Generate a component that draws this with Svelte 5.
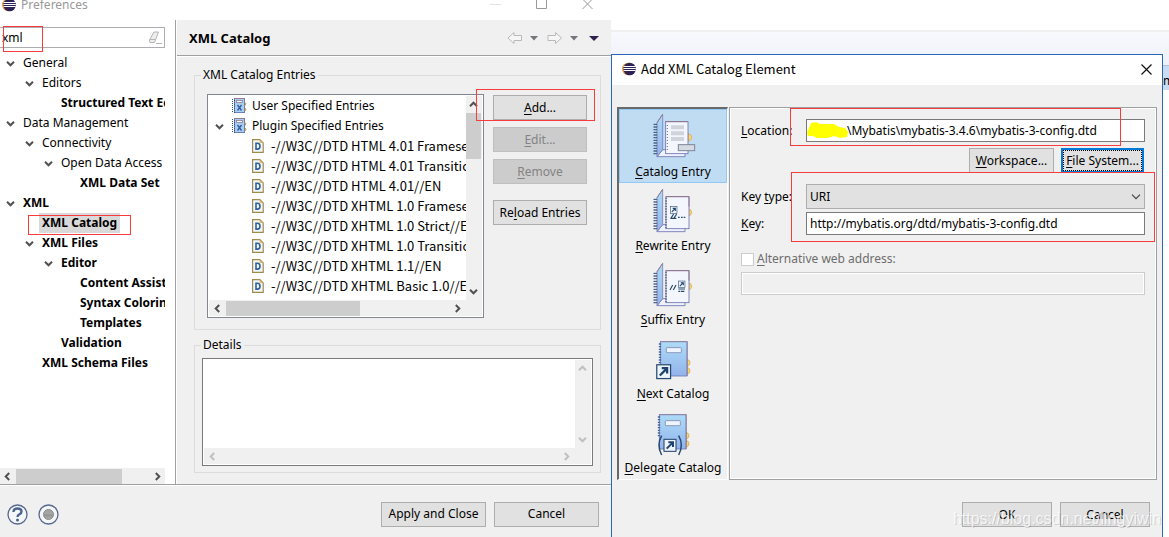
<script lang="ts">
  interface TreeItem {
    label: string;
    depth: number;
    open?: boolean;
    bold?: boolean;
    selected?: boolean;
  }

  const pages: TreeItem[] = [
    { label: 'General', depth: 0, open: true },
    { label: 'Editors', depth: 1, open: true },
    { label: 'Structured Text Editors', depth: 2, bold: true },
    { label: 'Data Management', depth: 0, open: true },
    { label: 'Connectivity', depth: 1, open: true },
    { label: 'Open Data Access', depth: 2, open: true },
    { label: 'XML Data Set', depth: 3, bold: true },
    { label: 'XML', depth: 0, open: true, bold: true },
    { label: 'XML Catalog', depth: 1, bold: true, selected: true },
    { label: 'XML Files', depth: 1, open: true, bold: true },
    { label: 'Editor', depth: 2, open: true, bold: true },
    { label: 'Content Assist', depth: 3, bold: true },
    { label: 'Syntax Coloring', depth: 3, bold: true },
    { label: 'Templates', depth: 3, bold: true },
    { label: 'Validation', depth: 2, bold: true },
    { label: 'XML Schema Files', depth: 1, bold: true },
  ];

  const entries = [
    '-//W3C//DTD HTML 4.01 Frameset//EN',
    '-//W3C//DTD HTML 4.01 Transitional//EN',
    '-//W3C//DTD HTML 4.01//EN',
    '-//W3C//DTD XHTML 1.0 Frameset//EN',
    '-//W3C//DTD XHTML 1.0 Strict//EN',
    '-//W3C//DTD XHTML 1.0 Transitional//EN',
    '-//W3C//DTD XHTML 1.1//EN',
    '-//W3C//DTD XHTML Basic 1.0//EN',
  ];

  const kinds = [
    { id: 'catalog', key: 'C', rest: 'atalog Entry' },
    { id: 'rewrite', key: 'R', rest: 'ewrite Entry' },
    { id: 'suffix', key: 'S', rest: 'uffix Entry' },
    { id: 'next', key: 'N', rest: 'ext Catalog' },
    { id: 'delegate', key: 'D', rest: 'elegate Catalog' },
  ];

  let filter = $state('xml');
  let kind = $state('catalog');
  let location = $state('\\Mybatis\\mybatis-3.4.6\\mybatis-3-config.dtd');
  let keyType = $state('URI');
  let key = $state('http://mybatis.org/dtd/mybatis-3-config.dtd');
</script>

{#snippet chevron(dir: string)}
  <svg class="chevron {dir}" width="9" height="9" viewBox="0 0 9 9">
    <path d="M1 2.8 4.5 6.3 8 2.8" fill="none" stroke="currentColor" stroke-width="2" />
  </svg>
{/snippet}

{#snippet eclipse()}
  <svg class="eclipse" width="14" height="14" viewBox="0 0 14 14">
    <circle cx="6.2" cy="7" r="6.2" fill="#f39a3c" />
    <circle cx="7.6" cy="7" r="6.3" fill="#2c2255" />
    <path d="M1.6 4.5H13.6M1.4 6.5H13.8M1.6 8.5H13.6" stroke="#fff" stroke-width="1" />
  </svg>
{/snippet}

{#snippet bookSmall()}
  <svg width="16" height="16" viewBox="0 0 16 16">
    <rect x="2.5" y=".5" width="10" height="14" fill="#a9cdf3" stroke="#6a7fb5" />
    <path d="M3 .5h9.5" stroke="#9a7a8c" />
    <path d="M.5 1v14M2.5 2v13" stroke="#35548c" stroke-dasharray="1 1" />
    <rect x="4.5" y="2.5" width="6" height="2" fill="#fff" stroke="#8a7f96" stroke-width=".8" />
    <path d="m5.5 7 4 5.5M9.5 7l-4 5.5" stroke="#2d5d9a" stroke-width="1.3" />
    <path d="M13 4.5q1.8 1 0 3M13 10q1.8 1.2 0 3" fill="#f3cf7a" stroke="#c09a45" />
  </svg>
{/snippet}

{#snippet dtdFile()}
  <svg width="12" height="14" viewBox="0 0 12 14">
    <path d="M.6.6h7.2l3.4 3.4v9.4H.6z" fill="#f3f8fd" stroke="#a08a4c" stroke-width="1.2" />
    <path d="M7.6.8V4h3.4z" fill="#e0b867" />
    <path d="M4 4.3h1.4q2.6 0 2.6 2.9t-2.6 2.9H4z" fill="none" stroke="#2f6199" stroke-width="1.6" />
  </svg>
{/snippet}

{#snippet arrowBox(x: number, y: number, s: number)}
  <g transform="translate({x} {y}) scale({s})">
    <rect x="1" y="1" width="18" height="18" fill="#eef4fb" stroke="#27486f" stroke-width="1.6" />
    <path d="M5 15 13 7M7.5 5.5h7v7" fill="none" stroke="#1f4370" stroke-width="3" />
  </g>
{/snippet}

{#snippet openBook(y: number)}
  <g transform="translate(0 {y})">
    <path d="M12 131 29 110H96V131Z" fill="#eef1fb" stroke="#6c70b0" stroke-width="2.5" />
    <path d="M12 29 29 4V110L12 131Z" fill="url(#cover)" stroke="#7d7fb2" stroke-width="2.5" />
    <path d="M12 29 29 4" stroke="#93707f" stroke-width="2.5" />
    <path d="M3 34h8M3 42h8M3 50h8M3 58h8M3 66h8M3 74h8M3 82h8M3 90h8M3 98h8M3 106h8M3 114h8M3 122h8" stroke="#4a5f86" stroke-width="4" stroke-linecap="round" stroke-dasharray="4 3" />
    <path d="M105 62q11 2 11 11t-11 12z" fill="#f9d679" stroke="#d2a23e" stroke-width="2" />
  </g>
{/snippet}

{#snippet closedBook(x: number, y: number)}
  <g transform="translate({x} {y})">
    <path d="M82 54q9 2 9 10t-9 11zM82 78q9 2 9 10t-9 11z" fill="#f9d679" stroke="#cd9f3d" stroke-width="2" />
    <rect x="2" y="1" width="80" height="103" fill="url(#cover)" stroke="#6c79b8" stroke-width="2.5" />
    <path d="M1 1h82v103" fill="none" stroke="#927f9b" stroke-width="2.5" />
    <rect x="20" y="19" width="45" height="15" rx="2" fill="#eef5fd" stroke="#8388ad" stroke-width="2.5" />
    <path d="M-1 8h7M-1 16h7M-1 24h7M-1 32h7M-1 40h7M-1 48h7M-1 56h7M-1 64h7" stroke="#46618e" stroke-width="4" stroke-linecap="round" stroke-dasharray="4 3" />
  </g>
{/snippet}

<div class="desktop">
  <section class="window prefs">
    <header class="caption">
      {@render eclipse()}
      <span>Preferences</span>
      <div class="caption-tools">
        <svg width="11" height="12" viewBox="0 0 11 12"><path d="M0 5.5h11" stroke="#e2e2e2" /></svg>
        <svg width="11" height="12" viewBox="0 0 11 12"><path d="M.5-.5h10v10H.5z" fill="none" stroke="#999" /></svg>
        <svg width="11" height="12" viewBox="0 0 11 12"><path d="m.5 0 10 10M10.5 0l-10 10" stroke="#999" /></svg>
      </div>
    </header>

    <div class="prefs-body">
      <nav class="side">
        <div class="filter">
          <input type="text" aria-label="Filter" bind:value={filter} />
          <svg width="14" height="14" viewBox="0 0 14 14">
            <path d="m6 1 4.5 0-4 10.5H2L1.500 9z" fill="#eee" stroke="#b5b5b5" />
            <path d="m2 8.5 5 0M8 12.5h6" stroke="#b5b5b5" />
          </svg>
          <i class="mark mark-filter"></i>
        </div>
        <ul class="tree">
          {#each pages as page}
            <li class:bold={page.bold} style="padding-left: {page.depth * 19}px">
              <span class="twisty">{#if page.open}{@render chevron('down')}{/if}</span>
              <span class="label" class:selected={page.selected}>{page.label}</span>
              {#if page.selected}<i class="mark mark-page"></i>{/if}
            </li>
          {/each}
        </ul>
        <div class="hbar">
          {@render chevron('left')}
          <span class="thumb wide"></span>
          {@render chevron('right')}
        </div>
      </nav>

      <main class="page">
        <div class="page-head">
          <h1>XML Catalog</h1>
          <svg width="94" height="14" viewBox="0 0 94 14">
            <path d="M1 7 7 1.5V4.5H14.5V9.5H7V12.5Z" fill="#f6f6f6" stroke="#b9b9b9" />
            <path d="M23 5h8l-4 4.5z" fill="#77757b" />
            <path d="M54.5 7 48.5 1.5V4.5H41V9.5H48.5V12.5Z" fill="#f6f6f6" stroke="#b9b9b9" />
            <path d="M63 5h8l-4 4.5z" fill="#77757b" />
            <path d="M82 5h10l-5 5z" fill="#30204f" />
          </svg>
        </div>

        <fieldset class="entries">
          <legend>XML Catalog Entries</legend>
          <div class="list">
            <ul>
              <li><span class="twisty"></span>{@render bookSmall()}<span>User Specified Entries</span></li>
              <li><span class="twisty">{@render chevron('down')}</span>{@render bookSmall()}<span>Plugin Specified Entries</span></li>
              {#each entries as entry}
                <li class="child">{@render dtdFile()}<span>{entry}</span></li>
              {/each}
            </ul>
            <div class="vbar">
              {@render chevron('up')}
              <span class="thumb"></span>
              {@render chevron('down')}
            </div>
            <div class="hbar">
              {@render chevron('left')}
              <span class="thumb"></span>
              {@render chevron('right')}
            </div>
          </div>
          <div class="actions">
            <div class="marked">
              <button type="button"><u>A</u>dd...</button>
              <i class="mark mark-add"></i>
            </div>
            <button type="button" disabled><u>E</u>dit...</button>
            <button type="button" disabled><u>R</u>emove</button>
            <button type="button" class="reload">Re<u>l</u>oad Entries</button>
          </div>
        </fieldset>

        <fieldset class="details">
          <legend>Details</legend>
          <div class="list off">
            <textarea aria-label="Details" readonly></textarea>
            <div class="vbar">{@render chevron('up')}<span class="gap"></span>{@render chevron('down')}</div>
            <div class="hbar">{@render chevron('left')}<span class="gap"></span>{@render chevron('right')}</div>
          </div>
        </fieldset>
      </main>
    </div>

    <footer class="prefs-foot">
      <button type="button" class="round" aria-label="Help">
        <svg width="21" height="21" viewBox="0 0 21 21">
          <circle cx="10.5" cy="10.5" r="9.5" fill="#f5f6f8" stroke="#56688f" stroke-width="1.3" />
          <path d="M6.5 8q0-3.5 4-3.5t4 3q0 1.8-2 2.8-2 1-2 2.7" fill="none" stroke="#4b6490" stroke-width="2.4" />
          <circle cx="10.5" cy="16" r="1.5" fill="#4b6490" />
        </svg>
      </button>
      <button type="button" class="round" aria-label="Record">
        <svg width="21" height="21" viewBox="0 0 21 21">
          <circle cx="10.5" cy="10.5" r="9.5" fill="#f5f6f8" stroke="#56688f" stroke-width="1.3" />
          <circle cx="10.5" cy="10.5" r="5" fill="#a5a5a5" stroke="#8a8a8a" />
          <path d="M6 11.5h9" stroke="#959595" stroke-width="2" />
        </svg>
      </button>
      <button type="button" class="push">Apply and Close</button>
      <button type="button">Cancel</button>
    </footer>
  </section>

  <div class="workbench">
    <div class="editor-tab">m</div>
    <section class="window dialog">
      <header class="caption">
        {@render eclipse()}
        <span>Add XML Catalog Element</span>
        <button type="button" class="close" aria-label="Close">
          <svg width="11" height="11" viewBox="0 0 11 11"><path d="m.5.5 10 10M10.5.5l-10 10" stroke="#111" stroke-width="1.2" /></svg>
        </button>
      </header>

      <div class="dialog-body">
        <div class="kinds">
          {#each kinds as item}
            <button type="button" class="kind" class:active={kind === item.id} onclick={() => (kind = item.id)}>
              <svg width="40" height="46" viewBox="0 0 120 138">
                <defs>
                  <linearGradient id="cover" x1="0" y1="0" x2="0" y2="1">
                    <stop offset="0" stop-color="#addcf6" />
                    <stop offset="1" stop-color="#93b3ec" />
                  </linearGradient>
                </defs>
                {#if item.id === 'catalog'}
                  {@render openBook(0)}
                  <rect x="38" y="26" width="67" height="96" fill="#f3f7fd" stroke="#6c70b0" stroke-width="2.5" />
                  <path d="M37 26h67" stroke="#93707f" stroke-width="2.5" />
                  <path d="M43 36v80" stroke="#5c6d92" stroke-width="3" stroke-dasharray="3 6" />
                  <path d="M54 43h39M54 61h39M54 78h39" stroke="#d0d3da" stroke-width="12" />
                  <rect x="76" y="95" width="49" height="18" fill="#d5dae3" stroke="#7d8596" stroke-width="3" />
                {:else if item.id === 'rewrite' || item.id === 'suffix'}
                  {@render openBook(3)}
                  <rect x="39" y="29" width="69" height="96" fill="#f3f7fd" stroke="#6c70b0" stroke-width="2.5" />
                  <path d="M38 29h70v30" fill="none" stroke="#93707f" stroke-width="2.5" />
                  <path d="M39 32v92" stroke="#5c6d92" stroke-width="5" stroke-dasharray="4 4" />
                  {#if item.id === 'rewrite'}
                    {@render arrowBox(51, 58, 1.1)}
                    <path d="m53 95 9-14M62 95l9-14M52 94h18M75 91h5M84 91h5M92 91h5" stroke="#27486f" stroke-width="3.5" />
                  {:else}
                    {@render arrowBox(75, 59, 1.1)}
                    <path d="m51 87 8-15M61 87l8-15M76 84h20M76 91h6M84 91h10" stroke="#27486f" stroke-width="3.5" />
                  {/if}
                {:else if item.id === 'next'}
                  {@render closedBook(20, 19)}
                  {@render arrowBox(9, 87, 2.3)}
                {:else}
                  {@render closedBook(17, 16)}
                  {@render arrowBox(31, 89, 2)}
                  <path d="M26 80q-16 28 0 58M77 80q16 28 0 58" fill="none" stroke="#27486f" stroke-width="4.5" />
                {/if}
              </svg>
              <span><u>{item.key}</u>{item.rest}</span>
            </button>
          {/each}
        </div>

        <form class="form">
          <div class="row">
            <label for="location"><u>L</u>ocation:</label>
            <div class="field masked">
              <input id="location" type="text" bind:value={location} />
              <svg width="41" height="17" viewBox="0 0 41 17">
                <path d="M4 1 9 0l4 2h14l5 3 6 1 3 4-1 5-7 1-6-2-6 2H10l-4-2-5 0-1-4 2-4z" fill="#ff0" />
              </svg>
            </div>
            <i class="mark mark-location"></i>
          </div>
          <div class="browse">
            <button type="button"><u>W</u>orkspace...</button>
            <button type="button" class="focused"><u>F</u>ile System...</button>
          </div>
          <div class="keys">
            <div class="row">
              <label for="key-type">Key <u>t</u>ype:</label>
              <div class="field select">
                <select id="key-type" bind:value={keyType}>
                  <option>URI</option>
                  <option>Schema location</option>
                </select>
                <svg width="10" height="6" viewBox="0 0 10 6"><path d="m1 .7 4 4 4-4" fill="none" stroke="#444" stroke-width="1.2" /></svg>
              </div>
            </div>
            <div class="row">
              <label for="key"><u>K</u>ey:</label>
              <div class="field"><input id="key" type="text" bind:value={key} /></div>
            </div>
            <i class="mark mark-keys"></i>
          </div>
          <label class="alt"><input type="checkbox" disabled /><span><u>A</u>lternative web address:</span></label>
          <input type="text" class="alt-url" aria-label="Alternative web address" disabled />
        </form>
      </div>

      <footer class="dialog-foot">
        <button type="button">OK</button>
        <button type="button">Cancel</button>
      </footer>
    </section>
    <div class="watermark">https://blog.csdn.net/lingyiwin</div>
  </div>
</div>

<style>
  :global(body) {
    background: #fff;
    overflow: hidden;
  }
  .desktop {
    --wide: 13px/20px "Noto Sans CJK SC", "Noto Sans", sans-serif;
    display: grid;
    grid-template-columns: minmax(0, 611fr) minmax(0, 558fr);
    min-height: 100vh;
    font: 12px/20px "Noto Sans", sans-serif;
    color: #000;
  }
  .desktop * { box-sizing: border-box; }
  button, input, select, textarea {
    font: inherit;
    color: inherit;
    margin: 0;
    padding: 0;
    border-radius: 0;
    outline: none;
  }
  button {
    height: 25px;
    line-height: 20px;
    border: 1px solid #adadad;
    background: #e1e1e1;
    white-space: nowrap;
  }
  button:disabled {
    background: #ccc;
    border-color: #bfbfbf;
    color: #838383;
  }
  u { text-underline-offset: 2px; }
  ul {
    list-style: none;
    margin: 0;
    padding: 0;
  }
  svg {
    display: block;
    flex: none;
  }
  .window {
    display: flex;
    flex-direction: column;
    background: #f0f0f0;
  }
  .caption {
    display: flex;
    align-items: center;
    font: var(--wide);
    background: #fff;
  }
  .mark {
    position: absolute;
    border: 1px solid #f83b3b;
    pointer-events: none;
    z-index: 2;
  }
  .marked { position: relative; }

  .chevron { color: #505050; }
  .chevron.left { transform: rotate(90deg); }
  .chevron.right { transform: rotate(-90deg); }
  .chevron.up { transform: rotate(180deg); }
  .off .chevron { color: #bfbfbf; }

  /* preferences window */
  .prefs .caption {
    height: 20px;
    padding: 0 18px 11px 2px;
    gap: 5px;
    font: inherit;
    color: #999;
  }
  .caption-tools {
    display: flex;
    gap: 35px;
    margin-left: auto;
  }
  .caption-tools svg { overflow: visible; }
  .prefs-body {
    flex: 1;
    display: grid;
    grid-template-columns: 176px minmax(0, 1fr);
    border-bottom: 1px solid #a0a0a0;
  }
  .side {
    display: flex;
    flex-direction: column;
    padding: 7px 10px 0 0;
    background: #fff;
    border-right: 1px solid #a0a0a0;
  }
  .filter {
    position: relative;
    display: flex;
    align-items: center;
    height: 21px;
    padding: 0 2px;
    border: 1px solid #abadb3;
    border-left: 0;
  }
  .filter input {
    flex: 1;
    min-width: 0;
    border: 0;
    background: none;
  }
  .mark-filter { left: 3px; top: -2px; width: 40px; height: 26px; }
  .tree {
    flex: 1;
    padding-top: 5px;
    overflow: hidden;
  }
  .tree li {
    position: relative;
    display: flex;
    align-items: center;
    height: 20px;
    white-space: nowrap;
  }
  .twisty {
    flex: none;
    width: 20px;
    padding-left: 6px;
  }
  .label { padding: 0 3px; }
  .bold { font-weight: 700; }
  .selected { background: #d9d9d9; }
  .mark-page { left: 28px; top: 2px; width: 103px; height: 20px; }
  .hbar, .vbar {
    display: flex;
    align-items: center;
    background: #f0f0f0;
  }
  .hbar {
    height: 16px;
    padding: 0 4px;
    gap: 4px;
  }
  .thumb { background: #cdcdcd; }
  .hbar .thumb {
    height: 15px;
    width: 54%;
    margin-right: auto;
  }
  .hbar .thumb.wide { width: 106px; }
  .gap { flex: 1; }
  .side .hbar { padding: 0 3px; }

  .page {
    display: flex;
    flex-direction: column;
    border-left: 1px solid #fff;
  }
  .page-head {
    display: flex;
    align-items: center;
    justify-content: space-between;
    height: 36px;
    padding: 1px 10px 0 12px;
    border-bottom: 1px solid #a0a0a0;
    box-shadow: 0 1px #fff;
  }
  h1 {
    margin: 0;
    font-size: 13px;
    line-height: 20px;
  }
  fieldset {
    min-width: 0;
    margin: 0 10px 0 17px;
    border: 1px solid #dcdcdc;
  }
  legend {
    margin-left: -1px;
    padding: 0 2px;
  }
  .entries {
    display: flex;
    gap: 9px;
    margin-top: 9px;
    padding: 9px 13px 11px 7px;
  }
  .entries .list { margin-left: 5px; }
  .list {
    flex: 1;
    min-width: 0;
    display: grid;
    grid-template-columns: minmax(0, 1fr) 16px;
    grid-template-rows: minmax(0, 1fr) 16px;
    padding: 1px;
    border: 1px solid #828790;
    background: linear-gradient(#f0f0f0, #f0f0f0) right 1px bottom 1px / 16px 16px no-repeat #fff;
  }
  .list ul {
    overflow: hidden;
    height: 204px;
  }
  .list li {
    display: flex;
    align-items: center;
    gap: 4px;
    height: 20px;
    white-space: nowrap;
  }
  .list .twisty {
    width: 19px;
    padding-left: 6px;
  }
  .list .child {
    padding-left: 43px;
    gap: 7px;
    font: var(--wide);
  }
  .vbar {
    flex-direction: column;
    padding: 4px 1px 4px 0;
    gap: 4px;
  }
  .vbar .thumb {
    width: 15px;
    height: 46px;
    margin-bottom: auto;
  }
  .actions {
    display: flex;
    flex-direction: column;
    gap: 7px;
    width: 94px;
    padding-top: 1px;
  }
  .actions button { width: 100%; }
  .actions .reload { margin-top: 9px; }
  .mark-add { left: -17px; top: -6px; width: 119px; height: 32px; }
  .details {
    flex: 1;
    display: flex;
    margin-top: 5px;
    margin-bottom: 11px;
    padding: 3px 7px 6px;
  }
  .details .list { border-color: #7a7a7a; }
  textarea {
    border: 0;
    resize: none;
    height: 100%;
    background: #fff;
  }
  .prefs-foot {
    display: flex;
    align-items: center;
    height: 52px;
    padding: 5px 12px 0 7px;
    gap: 8px;
    border-top: 1px solid #fff;
  }
  .prefs-foot button { width: 105px; }
  .prefs-foot .round {
    width: 21px;
    height: 21px;
    margin-right: 2px;
    border: 0;
    background: none;
  }
  .prefs-foot .push { margin-left: auto; }

  /* workbench behind, with the dialog on top */
  .workbench {
    position: relative;
    display: flex;
    flex-direction: column;
    padding: 54px 6px 0 0;
    background: linear-gradient(#f0f0f0 2px, #f8f9fd 2px, #e6eaf8) 0 30px / 100% 60px no-repeat #fff;
  }
  .editor-tab {
    position: absolute;
    right: 0;
    top: 65px;
    width: 6px;
    height: 25px;
    overflow: hidden;
    line-height: 30px;
    background: #c9dcf2;
    border-top: 1px solid #b4bfd0;
  }
  .dialog {
    flex: 1;
    position: relative;
    border: 1px solid #2c66b8;
    border-bottom: 0;
  }
  .dialog .caption {
    height: 30px;
    padding: 0 5px 2px 10px;
    gap: 5px;
  }
  .close {
    display: grid;
    place-items: center;
    width: 21px;
    margin-left: auto;
    border: 0;
    background: none;
  }
  .dialog-body {
    flex: 1;
    display: grid;
    grid-template-columns: 111px minmax(0, 1fr);
    gap: 1px;
    padding: 22px 5px 0 5px;
  }
  .kinds {
    border: 1px solid #a0a0a0;
    border-width: 2px 1px 1px 2px;
    border-color: #696969 #fff #fff #696969;
  }
  .kind {
    display: flex;
    flex-direction: column;
    align-items: center;
    width: 100%;
    height: 74px;
    padding: 3px 0 0;
    gap: 3px;
    border: 1px solid transparent;
    background: none;
  }
  .kind svg { overflow: visible; }
  .kind.active {
    background: #c0dcf3;
    border-color: #90c8f6;
  }
  .form {
    padding: 11px 11px 0;
    border: 1px solid #a0a0a0;
    box-shadow: inset 1px 1px #fff, inset -1px -1px #fff;
  }
  .row {
    position: relative;
    display: flex;
    align-items: center;
  }
  .row label { width: 65px; }
  .field {
    flex: 1;
    position: relative;
    display: flex;
  }
  .field input {
    width: 100%;
    height: 23px;
    padding: 0 3px;
    border: 1px solid #7a7a7a;
    background: #fff;
  }
  .masked input { padding-left: 40px; }
  .masked svg {
    position: absolute;
    left: 1px;
    top: 3px;
  }
  .mark-location { left: 49px; top: -11px; right: 24px; height: 38px; }
  .browse {
    display: flex;
    justify-content: flex-end;
    gap: 7px;
    padding: 6px 1px 11px;
  }
  .browse button { width: 85px; }
  .browse .focused {
    width: 83px;
    border: 2px solid #0078d7;
    outline: 1px dotted #000;
    outline-offset: -3px;
  }
  .keys {
    position: relative;
    display: grid;
    gap: 3px;
  }
  .mark-keys { left: 50px; top: -12px; right: -10px; height: 70px; }
  select {
    width: 100%;
    height: 25px;
    padding: 0 3px;
    border: 1px solid #adadad;
    background: #e1e1e1;
    appearance: none;
  }
  .select svg {
    position: absolute;
    right: 4px;
    top: 10px;
  }
  .alt {
    display: flex;
    align-items: center;
    gap: 3px;
    margin-top: 14px;
    color: #6d6d6d;
  }
  .alt input {
    width: 13px;
    height: 13px;
    border: 1px solid #ccc;
    background: #fff;
    appearance: none;
  }
  .alt-url {
    display: block;
    width: 100%;
    height: 23px;
    margin-top: 3px;
    border: 1px solid #ccc;
    background: #f0f0f0;
    box-shadow: inset 0 0 0 1px #fff;
  }
  .dialog-foot {
    display: flex;
    justify-content: flex-end;
    gap: 8px;
    height: 57px;
    padding: 22px 12px 0;
  }
  .dialog-foot button { width: 90px; }
  .watermark {
    position: absolute;
    right: 8px;
    bottom: 8px;
    font: 16px/20px "Liberation Sans", sans-serif;
    color: rgba(255, 255, 255, 0.75);
    text-shadow: 1px 1px rgba(0, 0, 0, 0.15);
    pointer-events: none;
  }
</style>
